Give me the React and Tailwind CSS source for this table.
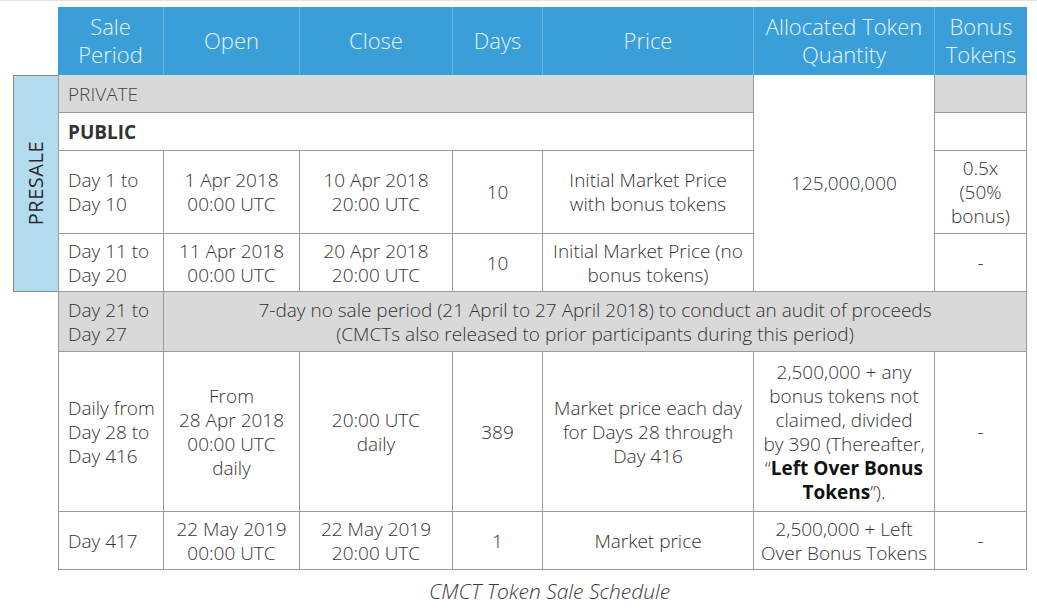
import React from 'react';

const line = 'border-[#9a9a9a]';

function Head({ col, children, last }) {
  return (
    <div
      className={`${col} row-start-1 flex items-center justify-center bg-[#3a9fd9] pb-[2px] text-center text-[22px] leading-[28px] text-[#e6f5fc] ${
        last ? '' : 'border-r border-[#68b6e3]'
      }`}
    >
      <div>{children}</div>
    </div>
  );
}

function Cell({ className, children, left }) {
  return (
    <div
      className={`flex items-center border-r border-b ${line} text-[19px] leading-[24px] text-[#333] ${
        left ? 'justify-start pl-[9px] text-left' : 'justify-center text-center'
      } ${className}`}
    >
      <div>{children}</div>
    </div>
  );
}

export default function App() {
  return (
    <div
      className="min-h-[615px] w-[1037px] border-t border-[#e2e2e2] bg-white font-light"
      style={{ fontFamily: '"Open Sans", "Noto Sans", sans-serif' }}
    >
      <div className="grid grid-cols-[45px_106px_136px_153px_90px_211px_181px_92px] grid-rows-[68px_38px_38px_83px_58px_60px_160px_58px] pl-[13px] pt-[6px]">
        {/* header */}
        <Head col="col-start-2">Sale<br />Period</Head>
        <Head col="col-start-3">Open</Head>
        <Head col="col-start-4">Close</Head>
        <Head col="col-start-5">Days</Head>
        <Head col="col-start-6">Price</Head>
        <Head col="col-start-7">Allocated Token<br />Quantity</Head>
        <Head col="col-start-8" last>Bonus<br />Tokens</Head>

        {/* presale label */}
        <div className="col-start-1 row-start-2 row-span-4 flex items-center justify-center border-t border-b border-l border-[#8a8a8a] bg-[#b4dcef]">
          <span className="rotate-180 text-[20px] font-normal tracking-[0.5px] text-[#2b2b2b] [writing-mode:vertical-rl]">PRESALE</span>
        </div>

        {/* private */}
        <Cell left className="col-start-2 col-span-5 row-start-2 border-l bg-[#d9d9d9] text-[#444]">PRIVATE</Cell>
        <Cell className="col-start-7 row-start-2 row-span-4 bg-white">125,000,000</Cell>
        <Cell className="col-start-8 row-start-2 bg-[#d9d9d9]" />

        {/* public */}
        <Cell left className="col-start-2 col-span-5 row-start-3 border-l font-bold text-[#111]">PUBLIC</Cell>
        <Cell className="col-start-8 row-start-3" />

        {/* day 1 to 10 */}
        <Cell left className="col-start-2 row-start-4 border-l">Day 1 to<br />Day 10</Cell>
        <Cell className="col-start-3 row-start-4">1 Apr 2018<br />00:00 UTC</Cell>
        <Cell className="col-start-4 row-start-4">10 Apr 2018<br />20:00 UTC</Cell>
        <Cell className="col-start-5 row-start-4">10</Cell>
        <Cell className="col-start-6 row-start-4">Initial Market Price<br />with bonus tokens</Cell>
        <Cell className="col-start-8 row-start-4">0.5x<br />(50%<br />bonus)</Cell>

        {/* day 11 to 20 */}
        <Cell left className="col-start-2 row-start-5 border-l">Day 11 to<br />Day 20</Cell>
        <Cell className="col-start-3 row-start-5">11 Apr 2018<br />00:00 UTC</Cell>
        <Cell className="col-start-4 row-start-5">20 Apr 2018<br />20:00 UTC</Cell>
        <Cell className="col-start-5 row-start-5">10</Cell>
        <Cell className="col-start-6 row-start-5 whitespace-nowrap">Initial Market Price (no<br />bonus tokens)</Cell>
        <Cell className="col-start-8 row-start-5">-</Cell>

        {/* day 21 to 27 */}
        <Cell left className="col-start-2 row-start-6 border-l bg-[#d9d9d9]">Day 21 to<br />Day 27</Cell>
        <Cell className="col-start-3 col-span-6 row-start-6 bg-[#d9d9d9]">
          7-day no sale period (21 April to 27 April 2018) to conduct an audit of proceeds<br />
          (CMCTs also released to prior participants during this period)
        </Cell>

        {/* daily */}
        <Cell left className="col-start-2 row-start-7 border-l">Daily from<br />Day 28 to<br />Day 416</Cell>
        <Cell className="col-start-3 row-start-7">From<br />28 Apr 2018<br />00:00 UTC<br />daily</Cell>
        <Cell className="col-start-4 row-start-7">20:00 UTC<br />daily</Cell>
        <Cell className="col-start-5 row-start-7">389</Cell>
        <Cell className="col-start-6 row-start-7">Market price each day<br />for Days 28 through<br />Day 416</Cell>
        <Cell className="col-start-7 row-start-7 whitespace-nowrap">
          2,500,000 + any<br />bonus tokens not<br />claimed, divided<br />by 390 (Thereafter,<br />
          “<span className="font-bold text-[#111]">Left Over Bonus<br />Tokens</span>”).
        </Cell>
        <Cell className="col-start-8 row-start-7">-</Cell>

        {/* day 417 */}
        <Cell left className="col-start-2 row-start-8 border-l">Day 417</Cell>
        <Cell className="col-start-3 row-start-8">22 May 2019<br />00:00 UTC</Cell>
        <Cell className="col-start-4 row-start-8">22 May 2019<br />20:00 UTC</Cell>
        <Cell className="col-start-5 row-start-8">1</Cell>
        <Cell className="col-start-6 row-start-8">Market price</Cell>
        <Cell className="col-start-7 row-start-8 whitespace-nowrap">2,500,000 + Left<br />Over Bonus Tokens</Cell>
        <Cell className="col-start-8 row-start-8">-</Cell>
      </div>

      <div className="ml-[65px] mt-[6px] w-[969px] text-center text-[21px] italic text-[#3a3a3a]">
        CMCT Token Sale Schedule
      </div>
    </div>
  );
}
